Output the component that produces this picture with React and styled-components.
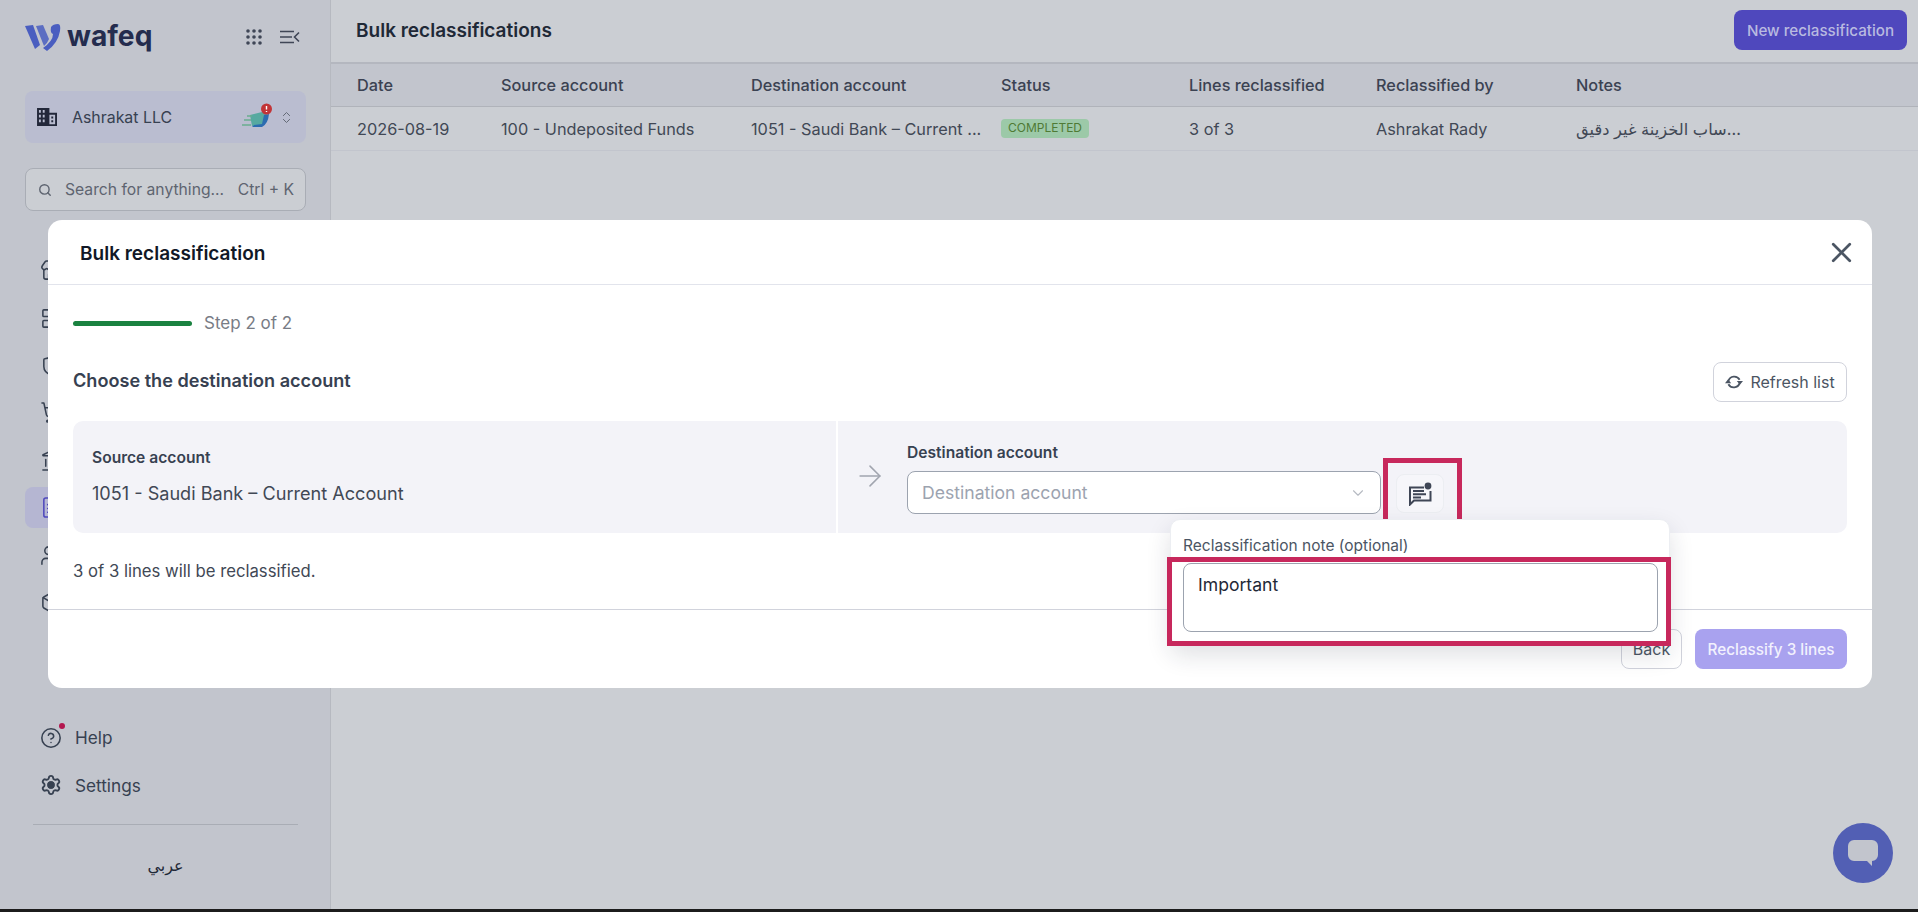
import React from "react";
import styled, { createGlobalStyle } from "styled-components";
import { ChevronDown, ChevronsUpDown, X, ArrowRight, Search, CircleHelp, Settings, Store, LayoutGrid, Shield, ShoppingCart, Landmark, FileText, Users, Box } from "lucide-react";

const Global = createGlobalStyle`
  html, body { margin: 0; padding: 0; height: 100%; background: #1c1c1c; overflow: hidden; }
  * { box-sizing: border-box; }
  body { font-family: Inter, "Noto Sans", sans-serif; color: #374151; }
`;

const Page = styled.div`
  display: flex;
  height: 909px;
  position: relative;
  overflow: hidden;
`;
const Sidebar = styled.aside`
  width: 331px;
  flex: none;
  background: #c2c5cd;
  border-right: 1px solid #b6b9c0;
  padding: 22px 24px 0 25px;
  display: flex;
  flex-direction: column;
`;
const Brand = styled.div`
  display: flex;
  align-items: center;
  height: 30px;
`;
const Wordmark = styled.span`
  font-size: 28.2px;
  font-weight: 700;
  color: #242c4e;
  margin-left: 6px;
  line-height: 28px;
  padding-bottom: 2px;
`;
const BrandTools = styled.div`
  margin-left: auto;
  display: flex;
  align-items: center;
  gap: 18px;
  padding-right: 6px;
`;
const CompanyBox = styled.div`
  margin-top: 39px;
  height: 52px;
  border-radius: 8px;
  background: #babdd0;
  display: flex;
  align-items: center;
  padding: 0 12px;
  color: #374151;
  font-size: 15.9px;
  font-weight: 400;
`;
const CompanyName = styled.span`
  margin-left: 14px;
  flex: 1;
`;
const SearchBox = styled.div`
  margin-top: 25px;
  height: 43px;
  border-radius: 8px;
  background: #cbced3;
  border: 1px solid #a9adb5;
  display: flex;
  align-items: center;
  padding: 0 11px 0 12px;
  font-size: 15.7px;
  color: #5e6470;
`;
const SearchText = styled.span`
  margin-left: 13px;
  flex: 1;
`;
const NavList = styled.nav`
  margin-top: 36px;
  display: flex;
  flex-direction: column;
  margin-bottom: auto;
`;
const NavItem = styled.div`
  height: 47.4px;
  display: flex;
  align-items: center;
  padding-left: 15px;
  position: relative;
  color: ${(p) => (p.$active ? "#4f48bd" : "#374151")};
  &::before {
    content: "";
    display: ${(p) => (p.$active ? "block" : "none")};
    position: absolute;
    left: 0;
    right: 0;
    top: 3px;
    bottom: 3px;
    border-radius: 8px;
    background: #b5b6d2;
  }
  & > svg { position: relative; }
`;
const FootItem = styled.div`
  height: 47.5px;
  display: flex;
  align-items: center;
  gap: 13px;
  padding-left: 15px;
  font-size: 17.2px;
  color: #374151;
  position: relative;
`;
const HelpDot = styled.span`
  position: absolute;
  left: 34px;
  top: 9px;
  width: 6px;
  height: 6px;
  border-radius: 50%;
  background: #b3174f;
`;
const SideRule = styled.div`
  height: 1px;
  background: #a9adb5;
  margin: 15px 8px 0;
`;
const Lang = styled.div`
  text-align: center;
  height: 84px;
  padding-top: 31px;
  font-size: 16px;
  color: #1f2937;
  font-family: "DejaVu Sans", sans-serif;
`;
const Main = styled.main`
  flex: 1;
  background: #cbced3;
  display: flex;
  flex-direction: column;
`;
const TopBar = styled.header`
  height: 64px;
  border-bottom: 2px solid #b4b7bf;
  display: flex;
  align-items: center;
  justify-content: space-between;
  padding: 0 11px 2px 25px;
`;
const PageTitle = styled.h1`
  margin: 0;
  font-size: 19px;
  font-weight: 600;
  color: #1f2937;
`;
const PrimaryDim = styled.button`
  height: 40px;
  width: 173px;
  border: 0;
  border-radius: 8px;
  background: #4f48bd;
  color: #b9bae0;
  font: 500 15.2px Inter, sans-serif;
`;
const Row = styled.div`
  display: grid;
  grid-template-columns: 144px 250px 250px 188px 187px 200px 1fr;
  align-items: center;
  padding-left: 26px;
  height: ${(p) => (p.$head ? "43px" : "44px")};
  background: ${(p) => (p.$head ? "#c2c5cd" : "transparent")};
  border-bottom: 1px solid ${(p) => (p.$head ? "#b0b3ba" : "#c2c5cd")};
  font-size: 16.3px;
  font-weight: ${(p) => (p.$head ? 500 : 400)};
  color: ${(p) => (p.$head ? "#3b4252" : "#414855")};
`;
const Badge = styled.span`
  justify-self: start;
  width: 88px;
  height: 19px;
  border-radius: 4px;
  background: #9cc9a8;
  color: #4f7a35;
  font-size: 12px;
  line-height: 18px;
  text-align: center;
  text-transform: uppercase;
`;
const ArabicCell = styled.span`
  font-family: Inter, "DejaVu Sans", sans-serif;
`;
const Bubble = styled.div`
  position: absolute;
  left: 1833px;
  top: 823px;
  width: 60px;
  height: 60px;
  border-radius: 50%;
  background: #525fb4;
  display: flex;
  align-items: center;
  justify-content: center;
`;
const Modal = styled.section`
  position: absolute;
  left: 48px;
  top: 220px;
  width: 1824px;
  height: 468px;
  background: #fff;
  border-radius: 14px;
  display: flex;
  flex-direction: column;
`;
const ModalHead = styled.div`
  height: 65px;
  flex: none;
  border-bottom: 1px solid #e2e4ec;
  display: flex;
  align-items: center;
  justify-content: space-between;
  padding: 0 14px 0 32px;
`;
const ModalTitle = styled.h2`
  margin: 2px 0 0;
  font-size: 19px;
  font-weight: 600;
  color: #111827;
`;
const CloseBtn = styled.button`
  border: 0;
  background: none;
  padding: 0;
  display: flex;
  color: #4b5563;
`;
const ModalBody = styled.div`
  flex: 1;
  padding: 0 25px;
  display: flex;
  flex-direction: column;
`;
const Stepper = styled.div`
  display: flex;
  align-items: center;
  gap: 12px;
  margin-top: 27px;
  height: 22px;
  font-size: 17px;
  color: #787c85;
`;
const StepBar = styled.span`
  width: 119px;
  height: 5px;
  border-radius: 3px;
  background: #1a8240;
`;
const SectionHead = styled.div`
  display: flex;
  align-items: center;
  justify-content: space-between;
  margin-top: 28px;
  height: 40px;
`;
const SectionTitle = styled.h3`
  margin: 0 0 4px;
  font-size: 18.1px;
  font-weight: 600;
  color: #374151;
`;
const GhostBtn = styled.button`
  height: 40px;
  width: ${(p) => p.$w}px;
  border: 1px solid #d1d3dc;
  border-radius: 8px;
  background: #fff;
  color: #4b5563;
  font: 400 16px Inter, sans-serif;
  display: flex;
  align-items: center;
  justify-content: center;
  gap: 7px;
  padding: 0;
`;
const Panel = styled.div`
  margin-top: 19px;
  height: 112px;
  border-radius: 10px;
  background: #f3f3f8;
  display: flex;
`;
const SourcePane = styled.div`
  width: 765px;
  border-right: 2px solid #fff;
  padding: 28px 0 0 19px;
`;
const FieldLabel = styled.div`
  font-size: 15.6px;
  font-weight: 600;
  color: #374151;
  line-height: 18px;
`;
const SourceValue = styled.div`
  margin-top: 15px;
  font-size: 18.1px;
  color: #414855;
  line-height: 22px;
`;
const DestPane = styled.div`
  display: flex;
  flex: 1;
`;
const ArrowSlot = styled.div`
  width: 69px;
  padding: 38px 0 0 15px;
  color: #a1a5af;
`;
const DestCol = styled.div`
  padding-top: 23px;
`;
const DestLine = styled.div`
  display: flex;
  align-items: flex-start;
  gap: 15px;
  margin-top: 9px;
`;
const Select = styled.div`
  width: 474px;
  height: 43px;
  border: 1px solid #9ca3af;
  border-radius: 8px;
  background: #fff;
  display: flex;
  align-items: center;
  justify-content: space-between;
  padding: 0 13px 0 14px;
  font-size: 17.6px;
  color: #9ca3af;
`;
const NoteAnchor = styled.div`
  position: relative;
  width: 48px;
  height: 39px;
  margin-top: 3px;
`;
const NoteBtn = styled.button`
  width: 48px;
  height: 39px;
  border: 1px solid #eceef2;
  border-radius: 8px;
  background: #f6f6fa;
  padding: 0;
  display: flex;
  align-items: center;
  justify-content: center;
`;
const Callout = styled.div`
  position: absolute;
  border: 5px solid #c7285c;
  pointer-events: none;
`;
const NoteCallout = styled(Callout)`
  left: -13px;
  top: -16px;
  width: 79px;
  height: 68px;
`;
const Popover = styled.div`
  position: absolute;
  left: -226px;
  top: 45px;
  width: 500px;
  height: 126px;
  background: #fff;
  border: 1px solid #eceef2;
  border-radius: 10px;
  box-shadow: 0 10px 24px rgba(30, 35, 60, 0.14);
  padding: 17px 12px 0;
  z-index: 2;
`;
const PopLabel = styled.div`
  font-size: 15.5px;
  line-height: 18px;
  color: #4b5563;
`;
const NoteField = styled.div`
  width: 475px;
  height: 69px;
  margin-top: 8px;
  border: 1px solid #9ca3af;
  border-radius: 8px;
  padding: 11px 14px;
  font-size: 17.6px;
  line-height: 20px;
  color: #1f2937;
`;
const FieldCallout = styled(Callout)`
  left: -4px;
  top: 37px;
  width: 504px;
  height: 89px;
`;
const Summary = styled.p`
  margin: 28px 0 0;
  font-size: 16.7px;
  line-height: 20px;
  color: #414855;
`;
const ModalFoot = styled.div`
  height: 79px;
  flex: none;
  border-top: 1px solid #d1d3dc;
  display: flex;
  align-items: flex-start;
  justify-content: flex-end;
  gap: 13px;
  padding: 19px 25px 0;
`;
const PrimaryLight = styled.button`
  width: 152px;
  height: 40px;
  border: 0;
  border-radius: 8px;
  background: #a9a2ef;
  color: #f2f1fd;
  font: 500 15.3px Inter, sans-serif;
`;

const Logo = () => (
  <svg width="36" height="27" viewBox="0 0 36 27">
    <path d="M0 2 L8 1 L15 21 L10 25 Z" fill="#4a5ec0" />
    <path d="M11 2 L18 1 L24 15 Q22 20 19 22 Z" fill="#4a5ec0" opacity=".85" />
    <path d="M26 3 Q28 0 33 0 Q36 0 35 7 Q33 19 22 27 L18 24 Q28 17 28 10 Q25 9 26 3 Z" fill="#4a5ec0" />
  </svg>
);
const DotsIcon = () => (
  <svg width="16" height="16" viewBox="0 0 16 16" fill="#3f4656">
    {[2, 8, 14].flatMap((y) => [2, 8, 14].map((x) => <circle key={x + "-" + y} cx={x} cy={y} r="1.8" />))}
  </svg>
);
const CollapseIcon = () => (
  <svg width="20" height="14" viewBox="0 0 20 14" fill="none" stroke="#3f4656" strokeWidth="1.6">
    <path d="M0 1.5h14M0 7h12M0 12.5h14M19 2.5 14.5 7l4.5 4.5" />
  </svg>
);
const OfficeIcon = () => (
  <svg width="21" height="19" viewBox="0 0 22 20" fill="#23283a">
    <path d="M0 0h13v5h8v14H0Zm2 2v3h2V2Zm4 0v3h2V2ZM2 7v3h2V7Zm4 0v3h2V7ZM2 12v3h2v-3Zm4 0v3h2v-3Zm7-5v10h6V7Zm2 2h2v2h-2Zm0 4h2v2h-2Z" fillRule="evenodd" />
  </svg>
);
const SyncBadge = () => (
  <svg width="32" height="28" viewBox="0 0 32 28" style={{ marginRight: 5 }}>
    <path d="M8 12 L20 9 L25 10 L22 22 L10 23 Z" fill="#57a9a0" />
    <path d="M22 12 L27 11 Q26 21 20 24 L10 24 L12 22 L20 21 Z" fill="#2c6cb0" />
    <path d="M5 13h5M2 17h7M0 22h9" stroke="#69ad8e" strokeWidth="1.6" />
    <circle cx="24.5" cy="6" r="5.5" fill="#c23538" />
    <path d="M24.5 3v3.6M24.5 8v1" stroke="#fff" strokeWidth="1.4" />
  </svg>
);
const NoteIcon = () => (
  <svg width="24" height="24" viewBox="0 0 24 24" fill="none">
    <path d="M16 5.5H2v17l4-4h16.5V9" stroke="#3f4656" strokeWidth="2" />
    <path d="M5 9h11M5 12.3h13M5 15.5h8" stroke="#3f4656" strokeWidth="2" />
    <circle cx="20" cy="4" r="3.4" fill="#3f4656" />
  </svg>
);
const RefreshIcon = () => (
  <svg width="18" height="18" viewBox="0 0 16 16" fill="#4b5563">
    <path d="M3 7A5.5 5.5 0 0 1 13 6M13 9A5.5 5.5 0 0 1 3 10" fill="none" stroke="#4b5563" strokeWidth="1.6" />
    <path d="M10.5 7H16l-2.75 3.5ZM0 9h5.5L2.75 5.5Z" />
  </svg>
);
const ChatIcon = () => (
  <svg width="32" height="28" viewBox="0 0 32 28" fill="#c2c5cd">
    <path d="M7 1h18a6 6 0 0 1 6 6v9a6 6 0 0 1-6 6v5l-5-5H7a6 6 0 0 1-6-6V7a6 6 0 0 1 6-6Z" />
  </svg>
);

const navIcons = [Store, LayoutGrid, Shield, ShoppingCart, Landmark, FileText, Users, Box];
const headers = ["Date", "Source account", "Destination account", "Status", "Lines reclassified", "Reclassified by", "Notes"];

export default function App() {
  return (
    <>
      <Global />
      <Page>
        <Sidebar>
          <Brand>
            <Logo />
            <Wordmark>wafeq</Wordmark>
            <BrandTools>
              <DotsIcon />
              <CollapseIcon />
            </BrandTools>
          </Brand>
          <CompanyBox>
            <OfficeIcon />
            <CompanyName>Ashrakat LLC</CompanyName>
            <SyncBadge />
            <ChevronsUpDown size={15} strokeWidth={1.5} color="#5e6470" />
          </CompanyBox>
          <SearchBox>
            <Search size={14} strokeWidth={2.4} />
            <SearchText>Search for anything...</SearchText>
            <span>Ctrl + K</span>
          </SearchBox>
          <NavList>
            {navIcons.map((Icon, i) => (
              <NavItem key={i} $active={i === 5}>
                <Icon size={23} strokeWidth={1.6} />
              </NavItem>
            ))}
          </NavList>
          <FootItem>
            <CircleHelp size={22} strokeWidth={1.7} />
            <HelpDot />
            Help
          </FootItem>
          <FootItem>
            <Settings size={22} strokeWidth={2}>
              <circle cx="12" cy="12" r="3" fill="currentColor" />
            </Settings>
            Settings
          </FootItem>
          <SideRule />
          <Lang>عربي</Lang>
        </Sidebar>
        <Main>
          <TopBar>
            <PageTitle>Bulk reclassifications</PageTitle>
            <PrimaryDim>New reclassification</PrimaryDim>
          </TopBar>
          <Row $head>
            {headers.map((h) => (
              <span key={h}>{h}</span>
            ))}
          </Row>
          <Row>
            <span>2026-08-19</span>
            <span>100 - Undeposited Funds</span>
            <span>1051 - Saudi Bank – Current ...</span>
            <Badge>Completed</Badge>
            <span>3 of 3</span>
            <span>Ashrakat Rady</span>
            <ArabicCell>ساب الخزينة غير دقيق...</ArabicCell>
          </Row>
        </Main>
        <Bubble>
          <ChatIcon />
        </Bubble>
        <Modal>
          <ModalHead>
            <ModalTitle>Bulk reclassification</ModalTitle>
            <CloseBtn>
              <X size={33} strokeWidth={2} />
            </CloseBtn>
          </ModalHead>
          <ModalBody>
            <Stepper>
              <StepBar />
              Step 2 of 2
            </Stepper>
            <SectionHead>
              <SectionTitle>Choose the destination account</SectionTitle>
              <GhostBtn $w={134}>
                <RefreshIcon />
                Refresh list
              </GhostBtn>
            </SectionHead>
            <Panel>
              <SourcePane>
                <FieldLabel>Source account</FieldLabel>
                <SourceValue>1051 - Saudi Bank – Current Account</SourceValue>
              </SourcePane>
              <DestPane>
                <ArrowSlot>
                  <ArrowRight size={34} strokeWidth={1.1} />
                </ArrowSlot>
                <DestCol>
                  <FieldLabel>Destination account</FieldLabel>
                  <DestLine>
                    <Select>
                      Destination account
                      <ChevronDown size={18} strokeWidth={1.5} color="#b6bac2" />
                    </Select>
                    <NoteAnchor>
                      <NoteBtn>
                        <NoteIcon />
                      </NoteBtn>
                      <NoteCallout />
                      <Popover>
                        <PopLabel>Reclassification note (optional)</PopLabel>
                        <NoteField>Important</NoteField>
                        <FieldCallout />
                      </Popover>
                    </NoteAnchor>
                  </DestLine>
                </DestCol>
              </DestPane>
            </Panel>
            <Summary>3 of 3 lines will be reclassified.</Summary>
          </ModalBody>
          <ModalFoot>
            <GhostBtn $w={61}>Back</GhostBtn>
            <PrimaryLight>Reclassify 3 lines</PrimaryLight>
          </ModalFoot>
        </Modal>
      </Page>
    </>
  );
}
